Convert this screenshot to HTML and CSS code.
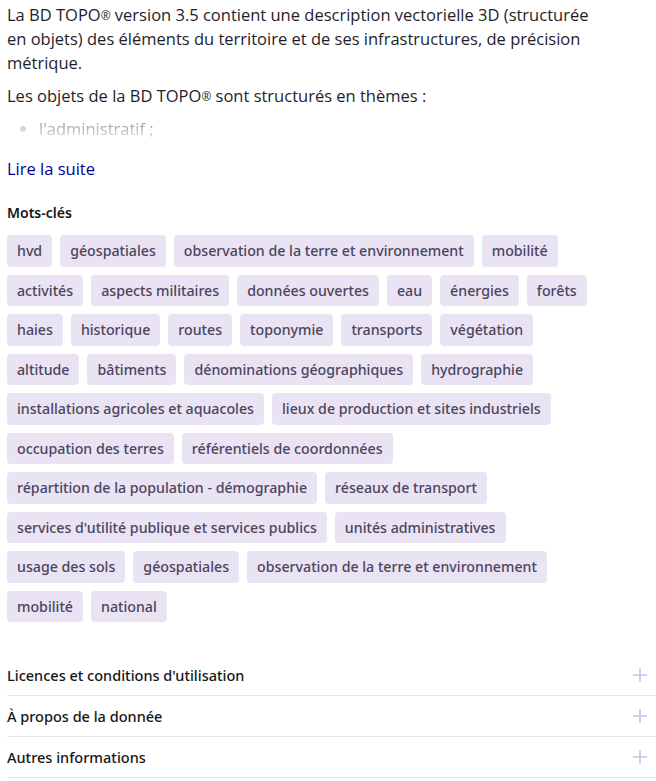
FILE: index.html
```html
<!DOCTYPE html>
<html lang="fr">
<head>
    <meta charset="UTF-8">
    <title>BD TOPO</title>
    <link rel="stylesheet" href="styles.css">
</head>
<body>
    <div class="description">
        <p>La BD TOPO<span class="reg">®</span> version 3.5 contient une description vectorielle 3D (structurée en objets) des éléments du territoire et de ses infrastructures, de précision métrique.</p>
        <p>Les objets de la BD TOPO<span class="reg">®</span> sont structurés en thèmes :</p>
        <ul class="faded">
            <li>l'administratif ;</li>
        </ul>
    </div>
    <a class="read-more" href="#">Lire la suite</a>

    <h3 class="keywords-title">Mots-clés</h3>
    <ul class="tags">
        <li>hvd</li>
        <li>géospatiales</li>
        <li>observation de la terre et environnement</li>
        <li>mobilité</li>
        <li>activités</li>
        <li>aspects militaires</li>
        <li>données ouvertes</li>
        <li>eau</li>
        <li>énergies</li>
        <li>forêts</li>
        <li>haies</li>
        <li>historique</li>
        <li>routes</li>
        <li>toponymie</li>
        <li>transports</li>
        <li>végétation</li>
        <li>altitude</li>
        <li>bâtiments</li>
        <li>dénominations géographiques</li>
        <li>hydrographie</li>
        <li>installations agricoles et aquacoles</li>
        <li>lieux de production et sites industriels</li>
        <li>occupation des terres</li>
        <li>référentiels de coordonnées</li>
        <li>répartition de la population - démographie</li>
        <li>réseaux de transport</li>
        <li>services d'utilité publique et services publics</li>
        <li>unités administratives</li>
        <li>usage des sols</li>
        <li>géospatiales</li>
        <li>observation de la terre et environnement</li>
        <li>mobilité</li>
        <li>national</li>
    </ul>

    <div class="accordion">
        <div class="accordion-item">
            <span>Licences et conditions d'utilisation</span>
            <svg class="plus" width="14" height="14" viewBox="0 0 14 14"><path d="M7 0v14M0 7h14" stroke="currentColor" stroke-width="1.6"/></svg>
        </div>
        <div class="accordion-item">
            <span>À propos de la donnée</span>
            <svg class="plus" width="14" height="14" viewBox="0 0 14 14"><path d="M7 0v14M0 7h14" stroke="currentColor" stroke-width="1.6"/></svg>
        </div>
        <div class="accordion-item">
            <span>Autres informations</span>
            <svg class="plus" width="14" height="14" viewBox="0 0 14 14"><path d="M7 0v14M0 7h14" stroke="currentColor" stroke-width="1.6"/></svg>
        </div>
    </div>
</body>
</html>
```

FILE: styles.css
```css
body {
    margin: 0;
    padding: 3px 0 0 7px;
    font-family: "Open Sans", "Noto Sans", sans-serif;
    color: #161616;
    background: #fff;
}
.description {
    max-width: 592px;
    font-size: 16.5px;
    line-height: 24px;
    color: #1e1e2a;
}
.description p {
    margin: 0 0 9px;
}
.reg {
    font-size: 0.72em;
    vertical-align: text-top;
}
.faded {
    margin: 0;
    padding-left: 32px;
    color: #a8a8a8;
    height: 28px;
    overflow: hidden;
    -webkit-mask-image: linear-gradient(to bottom, #000 30%, transparent 100%);
}
.faded li::marker {
    color: #d0d0d0;
}
.read-more {
    display: inline-block;
    margin-top: 12px;
    font-size: 16.5px;
    line-height: 24px;
    color: #000091;
    text-decoration: none;
}
.keywords-title {
    margin: 22px 0 12px;
    font-family: "Noto Sans", sans-serif;
    font-size: 14px;
    font-weight: 600;
    line-height: 20px;
    color: #161616;
}
.tags {
    list-style: none;
    margin: 0;
    padding: 0;
    max-width: 600px;
    display: flex;
    flex-wrap: wrap;
    gap: 8px;
}
.tags li {
    height: 31.5px;
    padding: 0 10px;
    display: flex;
    align-items: center;
    font-family: "Noto Sans", sans-serif;
    font-size: 14.2px;
    font-weight: 500;
    color: #4b4560;
    background: #e9e3f3;
    border-radius: 4px;
}
.accordion {
    margin-top: 33px;
}
.accordion-item {
    height: 40px;
    display: flex;
    align-items: center;
    justify-content: space-between;
    padding-right: 9px;
    border-bottom: 1px solid #e5e5e5;
    font-family: "Noto Sans", sans-serif;
    font-size: 14.5px;
    font-weight: 500;
    color: #161616;
}
.plus {
    color: #c6c1e5;
}
```
